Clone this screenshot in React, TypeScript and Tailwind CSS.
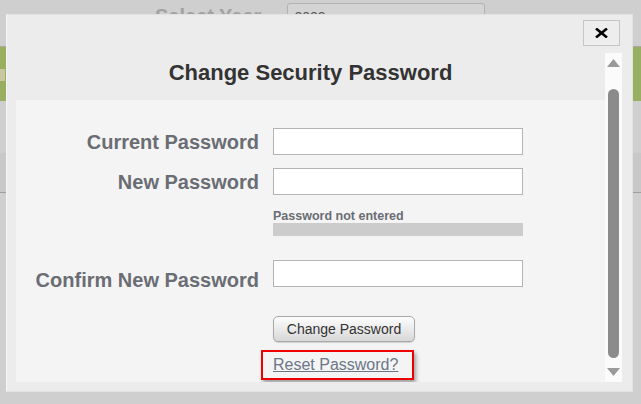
import React from 'react'

function ScrollArrow({ down }: { down?: boolean }) {
  return (
    <svg width="13" height="8" viewBox="0 0 13 8" className="shrink-0">
      <polygon points={down ? '0,0 13,0 6.5,8' : '6.5,0 13,8 0,8'} fill="#9a9a9a" />
    </svg>
  )
}

function Field({ label, low }: { label: string; low?: boolean }) {
  return (
    <div className="flex items-center">
      <label className={low ? 'w-[243px] pt-[13px] text-right text-[20px] leading-[20px] font-bold text-[#6a6d73]' : 'w-[243px] text-right text-[20px] leading-[20px] font-bold text-[#6a6d73]'}>
        {label}
      </label>
      <input type="password" className="ml-[14px] w-[250px] h-[27px] bg-white border border-[#b4b4b4] outline-none" />
    </div>
  )
}

export default function App() {
  return (
    <div className="relative w-[641px] h-[404px] overflow-hidden bg-[#cfcfcf] font-['Liberation_Sans',Arial,sans-serif]">
      {/* page underneath the dialog */}
      <div className="flex items-start h-[47px] pl-[155px] pt-[4px] border-b border-[#a8a8a8]">
        <span className="text-[20px] leading-[24px] font-bold text-[#a2a2a2]">Select Year</span>
        <div className="ml-[26px] mt-[-1px] w-[198px] h-[28px] rounded-[3px] border border-[#b2b2b2] bg-[#d4d4d4] pl-[6px] text-[14px] leading-[26px] text-[#555]">2023</div>
      </div>
      <div className="flex flex-col h-[54px] bg-[#98af62]">
        <div className="mt-[22px] w-[5px] h-[12px] bg-[#c9c6a4]" />
      </div>
      <div className="h-[52px]" />
      <div className="h-[40px] bg-[#c8c8c8] border-b border-[#9e9e9e]" />

      {/* dialog */}
      <div className="absolute left-[6px] top-[14px] w-[627px] h-[378px] flex flex-col bg-[#ececec] border border-[#e2e2e2] border-l-[#f6f6f6]">
        <div className="flex justify-end pt-[5px] pr-[12px]">
          <button className="w-[37px] h-[26px] flex items-center justify-center border border-[#c6c6c6] bg-[#ededed]">
            <svg width="13" height="10" viewBox="0 0 13 10">
              <path d="M1 0.5 L12 9.5 M12 0.5 L1 9.5" stroke="#000" strokeWidth="2.6" />
            </svg>
          </button>
        </div>

        <div className="flex ml-[9px] mr-[10px] mt-[7px] h-[329px]">
          <div className="w-[589px] flex flex-col overflow-hidden">
            <div className="shrink-0 h-[47px] pt-[7px] text-center">
              <h2 className="text-[22px] leading-[26px] font-bold text-[#333333]">Change Security Password</h2>
            </div>

            <div className="flex-1 bg-[#f4f4f4] pt-[28px]">
              <Field label="Current Password" />
              <div className="mt-[13px]">
                <Field label="New Password" />
              </div>
              <div className="ml-[257px] mt-[14px] w-[250px]">
                <div className="text-[12.5px] leading-[14px] font-bold text-[#6a6d73]">Password not entered</div>
                <div className="h-[13px] bg-[#cccccc]" />
              </div>
              <div className="mt-[21px]">
                <Field label="Confirm New Password" low />
              </div>
              <div className="ml-[257px] mt-[26px]">
                <button className="w-[142px] h-[26px] rounded-[5px] border border-[#a9a9a9] bg-gradient-to-b from-[#fdfdfd] to-[#d8d8d8] text-[14px] text-[#333] shadow-[0_1px_1px_rgba(0,0,0,0.15)]">
                  Change Password
                </button>
              </div>
              <div className="ml-[245px] mt-[8px] w-[153px] h-[30px] flex items-center pl-[10px] border-2 border-[#ee0000] shadow-[2px_3px_4px_rgba(0,0,0,0.35)]">
                <a href="#" className="text-[16px] leading-[18px] text-[#6b7788] underline">Reset Password?</a>
              </div>
            </div>
          </div>

          <div className="w-[17px] flex flex-col items-center bg-[#fbfbfb] pt-[6px]">
            <ScrollArrow />
            <div className="mt-[22px] w-[11px] h-[269px] rounded-full bg-[#8b8b8b]" />
            <div className="mt-[10px]">
              <ScrollArrow down />
            </div>
          </div>
        </div>
      </div>
    </div>
  )
}
